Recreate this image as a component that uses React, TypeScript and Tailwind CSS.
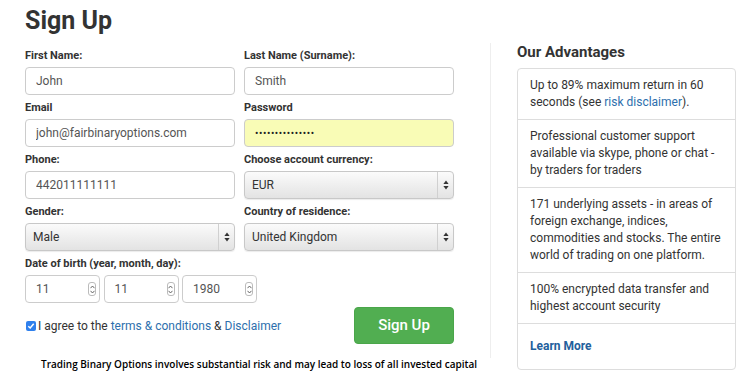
import React from "react";

function Label({ children }: { children: React.ReactNode }) {
  return (
    <div className="text-[11px] leading-[17px] font-bold text-[#333] mb-[3px]">
      {children}
    </div>
  );
}

function TextField({ value, yellow }: { value: string; yellow?: boolean }) {
  return (
    <input
      readOnly
      value={value}
      className={`w-full h-[28px] rounded-[4px] border border-[#ccc] px-[10px] outline-none ${
        yellow
          ? "bg-[#f9fcb6] text-[10px] tracking-[0.6px] text-[#222]"
          : "bg-white text-[12px] text-[#555]"
      }`}
    />
  );
}

function SelectBox({ value }: { value: string }) {
  return (
    <div className="flex h-[28px] rounded-[4px] border border-[#c8c8c8] bg-gradient-to-b from-[#fbfbfb] to-[#e3e3e3] shadow-[0_1px_1px_rgba(0,0,0,0.08)]">
      <span className="flex-1 pl-[7px] flex items-center text-[12px] text-[#333]">
        {value}
      </span>
      <span className="w-[16px] border-l border-[#d0d0d0] flex items-center justify-center">
        <svg width="6" height="10" viewBox="0 0 6 10">
          <path d="M3 0.5 L5.6 4 L0.4 4 Z" fill="#333" />
          <path d="M3 9.5 L5.6 6 L0.4 6 Z" fill="#333" />
        </svg>
      </span>
    </div>
  );
}

function NumberField({ value }: { value: string }) {
  return (
    <div className="flex items-center w-[75px] h-[28px] rounded-[4px] border border-[#ccc] bg-white pl-[10px] pr-[3px]">
      <span className="flex-1 text-[12px] text-[#555]">{value}</span>
      <span className="w-[8px] h-[14px] rounded-[3px] border border-[#bbb] flex flex-col items-center justify-center gap-[1px]">
        <svg width="5" height="4" viewBox="0 0 5 4">
          <path d="M0.5 3.2 L2.5 1 L4.5 3.2" stroke="#555" strokeWidth="0.9" fill="none" />
        </svg>
        <svg width="5" height="4" viewBox="0 0 5 4">
          <path d="M0.5 0.8 L2.5 3 L4.5 0.8" stroke="#555" strokeWidth="0.9" fill="none" />
        </svg>
      </span>
    </div>
  );
}

const advantages: React.ReactNode[] = [
  <>
    Up to 89% maximum return in 60 seconds (see{" "}
    <a className="text-[#2d6fad]">risk disclaimer</a>).
  </>,
  <>Professional customer support available via skype, phone or chat - by traders for traders</>,
  <>
    171 underlying assets - in areas of foreign exchange, indices, commodities and stocks. The
    entire world of trading on one platform.
  </>,
  <>100% encrypted data transfer and highest account security</>,
];

export default function App() {
  return (
    <div className="w-[750px] h-[376px] bg-white overflow-hidden font-['Roboto',sans-serif] text-[#333]">
      {/* Title */}
      <h1 className="h-[43px] pl-[25px] pt-[5px] text-[25px] leading-[32px] font-bold text-[#333]">
        Sign Up
      </h1>

      <div className="flex items-start">
        {/* Left side: form */}
        <div className="w-[491px]">
          <div className="pl-[25px] pr-[36px] pt-[4px] pb-[14px] border-r border-[#eee]">
            <div className="grid grid-cols-2 gap-x-[9px] gap-y-[4px]">
              <div>
                <Label>First Name:</Label>
                <TextField value="John" />
              </div>
              <div>
                <Label>Last Name (Surname):</Label>
                <TextField value="Smith" />
              </div>
              <div>
                <Label>Email</Label>
                <TextField value="john@fairbinaryoptions.com" />
              </div>
              <div>
                <Label>Password</Label>
                <TextField value="•••••••••••••••" yellow />
              </div>
              <div>
                <Label>Phone:</Label>
                <TextField value="442011111111" />
              </div>
              <div>
                <Label>Choose account currency:</Label>
                <SelectBox value="EUR" />
              </div>
              <div>
                <Label>Gender:</Label>
                <SelectBox value="Male" />
              </div>
              <div>
                <Label>Country of residence:</Label>
                <SelectBox value="United Kingdom" />
              </div>
            </div>

            <div className="mt-[4px]">
              <Label>Date of birth (year, month, day):</Label>
              <div className="flex gap-[3.5px]">
                <NumberField value="11" />
                <NumberField value="11" />
                <NumberField value="1980" />
              </div>
            </div>

            <div className="mt-[4px] flex items-center justify-between">
              <div className="flex items-center gap-[2px] pl-[1px] text-[12px]">
                <span className="w-[10px] h-[10px] rounded-[2px] bg-[#2f80ed] flex items-center justify-center">
                  <svg width="8" height="8" viewBox="0 0 8 8">
                    <path d="M1.3 4.2 L3.2 6 L6.7 1.8" stroke="#fff" strokeWidth="1.5" fill="none" />
                  </svg>
                </span>
                <span>
                  I agree to the <a className="text-[#2d6fad]">terms &amp; conditions</a> &amp;{" "}
                  <a className="text-[#2d6fad]">Disclaimer</a>
                </span>
              </div>
              <button className="w-[100px] h-[37px] rounded-[4px] bg-[#51ae51] border border-[#4aa64a] text-white text-[15px] font-medium">
                Sign Up
              </button>
            </div>
          </div>

          <p className="pl-[41px] text-[10px] leading-[12px] font-semibold text-black font-['Open_Sans',sans-serif]">
            Trading Binary Options involves substantial risk and may lead to loss of all invested capital
          </p>
        </div>

        {/* Right side: advantages */}
        <div className="pl-[26px] w-[245px]">
          <h2 className="text-[15px] leading-[18px] font-bold text-[#333] mb-[7px]">
            Our Advantages
          </h2>
          <div className="border border-[#ddd] rounded-[4px] text-[12px] leading-[17px] text-[#333]">
            {advantages.map((a, i) => (
              <div key={i} className="px-[12px] py-[8px] border-b border-[#ddd]">
                {a}
              </div>
            ))}
            <div className="px-[12px] py-[14px]">
              <a className="font-bold text-[#23609c]">Learn More</a>
            </div>
          </div>
        </div>
      </div>
    </div>
  );
}
